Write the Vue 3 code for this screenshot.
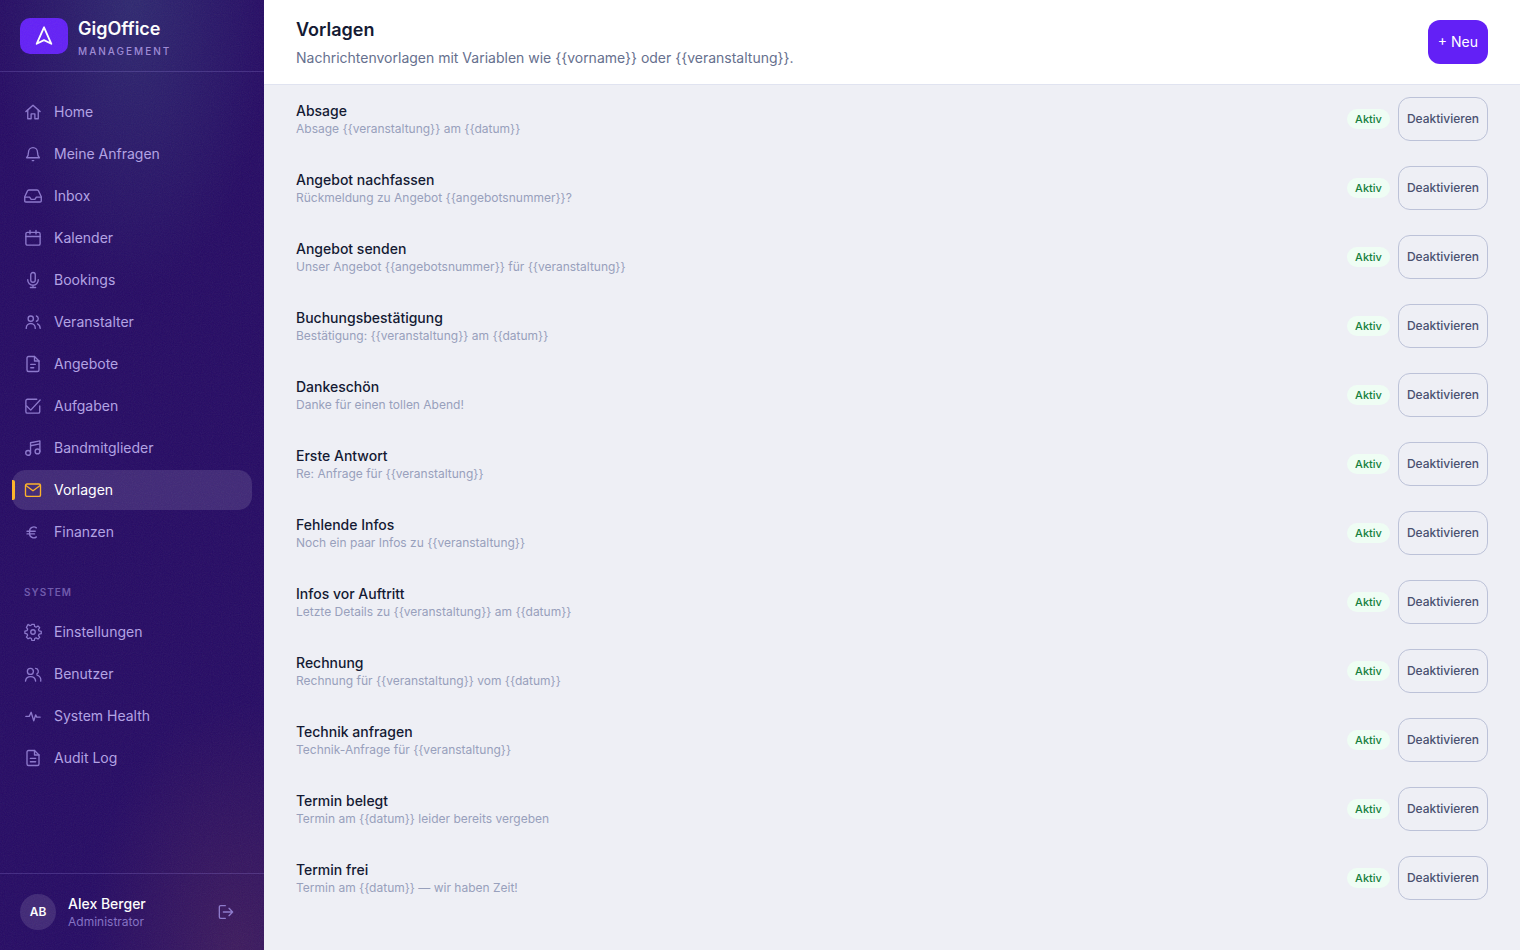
<script setup>
import { ref } from 'vue'

const icons = {
    home: '<path d="M2.500 11.500 12 3l9.500 8.500"/><path d="M5 9.500V21h4.500v-6.500h5V21H19V9.500"/>',
    bell: '<path d="M6 9.500a6 6 0 0 1 12 0c0 5 2.500 7.500 2.500 7.500h-17S6 14.500 6 9.500Z"/><path d="M11 20.800h2"/>',
    inbox: '<path d="M1 13 4.500 5.500Q5 4 6.500 4h11q1.500 0 2 1.500L23 13v5.500q0 1.500-1.500 1.500h-19Q1 20 1 18.500Z"/><path d="M1 13.500h6.500l2 3h5l2-3H23"/>',
    calendar: '<rect x="2.500" y="4.500" width="19" height="17" rx="2"/><path d="M2.500 10h19M8 2v4.500M16 2v4.500"/>',
    mic: '<rect x="9" y="2" width="6" height="13" rx="3"/><path d="M5 11.500v.5a7 7 0 0 0 14 0v-.5M12 19v3M8.500 22h7"/>',
    people: '<circle cx="9" cy="7.500" r="3.500"/><path d="M3 20.500v-.5a6 6 0 0 1 12 0v.5M16.500 4a3.700 3.700 0 0 1 0 7M18 14.500a6.500 6.500 0 0 1 3.500 6"/>',
    file: '<path d="M14 2H6a2 2 0 0 0-2 2v16a2 2 0 0 0 2 2h12a2 2 0 0 0 2-2V8Z"/><path d="M14 2v6h6M9 12.500h6M9 17h4"/>',
    check: '<path d="M17 3H4.500a2 2 0 0 0-2 2v14.500a2 2 0 0 0 2 2H19a2 2 0 0 0 2-2V12"/><path d="m3.500 12 5.500 5.500L21.500 4"/>',
    music: '<circle cx="5.500" cy="18.500" r="3.200"/><circle cx="18" cy="16.500" r="3.200"/><path d="M8.700 18.500V5l12.500-2.500v14M8.700 9l12.500-2.500"/>',
    mail: '<rect x="2" y="4" width="20" height="16.500" rx="2"/><path d="m2.500 6 9.500 7 9.500-7"/>',
    euro: '<path d="M16.500 6.500A5.500 5.500 0 0 0 7.500 11v3a5.500 5.500 0 0 0 9 4.500M4 11h11M4 14.500h10"/>',
    gear: '<circle cx="12" cy="12" r="3"/><path d="M10.300 1.800h3.400l.6 3 2.100.9 2.600-1.700 2.400 2.400-1.700 2.600.9 2 3 .7v3.200l-3 .6-.9 2.100 1.700 2.600-2.400 2.400-2.600-1.700-2.100.9-.6 3h-3.400l-.6-3-2.100-.9L5 22.200l-2.400-2.400 1.700-2.600-.9-2.100-3-.6v-3.200l3-.7.9-2-1.700-2.600L5 1.800l2.600 1.700 2.100-.9Z" transform="translate(.8 .2) scale(.94)"/>',
    users: '<circle cx="8.500" cy="8.500" r="4"/><path d="M2 21.500a6.800 6.800 0 0 1 13.500 0M15.500 4.500a4 4 0 0 1 1.500 7.500M17.500 13.500a7 7 0 0 1 4.800 8"/>',
    pulse: '<path d="M2.500 12.500H7l2.500-5.500 3.500 11.500 2.500-8 1.500 3h4.500"/>',
    log: '<path d="M14 2H6a2 2 0 0 0-2 2v16a2 2 0 0 0 2 2h12a2 2 0 0 0 2-2V8Z"/><path d="M14 2v6h6M8.500 12.500h7M8.500 17h7"/>',
}

const mainNav = [
    { label: 'Home', icon: 'home' },
    { label: 'Meine Anfragen', icon: 'bell' },
    { label: 'Inbox', icon: 'inbox' },
    { label: 'Kalender', icon: 'calendar' },
    { label: 'Bookings', icon: 'mic' },
    { label: 'Veranstalter', icon: 'people' },
    { label: 'Angebote', icon: 'file' },
    { label: 'Aufgaben', icon: 'check' },
    { label: 'Bandmitglieder', icon: 'music' },
    { label: 'Vorlagen', icon: 'mail' },
    { label: 'Finanzen', icon: 'euro' },
]

const systemNav = [
    { label: 'Einstellungen', icon: 'gear' },
    { label: 'Benutzer', icon: 'users' },
    { label: 'System Health', icon: 'pulse' },
    { label: 'Audit Log', icon: 'log' },
]

const current = ref('Vorlagen')

const intro = 'Nachrichtenvorlagen mit Variablen wie {{vorname}} oder {{veranstaltung}}.'

const templates = ref([
    { name: 'Absage', subject: 'Absage {{veranstaltung}} am {{datum}}', active: true },
    { name: 'Angebot nachfassen', subject: 'Rückmeldung zu Angebot {{angebotsnummer}}?', active: true },
    { name: 'Angebot senden', subject: 'Unser Angebot {{angebotsnummer}} für {{veranstaltung}}', active: true },
    { name: 'Buchungsbestätigung', subject: 'Bestätigung: {{veranstaltung}} am {{datum}}', active: true },
    { name: 'Dankeschön', subject: 'Danke für einen tollen Abend!', active: true },
    { name: 'Erste Antwort', subject: 'Re: Anfrage für {{veranstaltung}}', active: true },
    { name: 'Fehlende Infos', subject: 'Noch ein paar Infos zu {{veranstaltung}}', active: true },
    { name: 'Infos vor Auftritt', subject: 'Letzte Details zu {{veranstaltung}} am {{datum}}', active: true },
    { name: 'Rechnung', subject: 'Rechnung für {{veranstaltung}} vom {{datum}}', active: true },
    { name: 'Technik anfragen', subject: 'Technik-Anfrage für {{veranstaltung}}', active: true },
    { name: 'Termin belegt', subject: 'Termin am {{datum}} leider bereits vergeben', active: true },
    { name: 'Termin frei', subject: 'Termin am {{datum}} — wir haben Zeit!', active: true },
])
</script>

<template>
    <div class="app">
        <aside class="sidebar">
            <svg class="grain" aria-hidden="true">
                <filter id="grain">
                    <feTurbulence type="fractalNoise" baseFrequency="0.9" numOctaves="4" stitchTiles="stitch" />
                </filter>
                <rect width="100%" height="100%" filter="url(#grain)" />
            </svg>

            <div class="brand">
                <span class="logo">
                    <svg viewBox="0 0 24 24" aria-hidden="true"><path d="M12 2.500 4 20.500 12 16.500l8 4Z" /></svg>
                </span>
                <div class="brand-text">
                    <div class="brand-name">GigOffice</div>
                    <div class="brand-sub">MANAGEMENT</div>
                </div>
            </div>

            <nav class="nav">
                <a
                    v-for="item in mainNav"
                    :key="item.label"
                    href="#"
                    class="nav-item"
                    :class="{ active: item.label === current }"
                    @click.prevent="current = item.label"
                >
                    <svg class="icon" viewBox="0 0 24 24" aria-hidden="true" v-html="icons[item.icon]"></svg>
                    <span>{{ item.label }}</span>
                </a>
                <div class="nav-label">SYSTEM</div>
                <a
                    v-for="item in systemNav"
                    :key="item.label"
                    href="#"
                    class="nav-item"
                    :class="{ active: item.label === current }"
                    @click.prevent="current = item.label"
                >
                    <svg class="icon" viewBox="0 0 24 24" aria-hidden="true" v-html="icons[item.icon]"></svg>
                    <span>{{ item.label }}</span>
                </a>
            </nav>

            <div class="account">
                <span class="avatar">AB</span>
                <div class="account-text">
                    <div class="account-name">Alex Berger</div>
                    <div class="account-role">Administrator</div>
                </div>
                <button type="button" class="logout" aria-label="Abmelden">
                    <svg viewBox="0 0 24 24" aria-hidden="true">
                        <path d="M11 2.500H4a2 2 0 0 0-2 2v15a2 2 0 0 0 2 2h7M8 12h14M16.500 6.500 22 12l-5.500 5.500" />
                    </svg>
                </button>
            </div>
        </aside>

        <main class="content">
            <header class="page-head">
                <div>
                    <h1>Vorlagen</h1>
                    <p>{{ intro }}</p>
                </div>
                <button type="button" class="btn-primary">+ Neu</button>
            </header>

            <ul class="list">
                <li v-for="t in templates" :key="t.name" class="row">
                    <div class="row-text">
                        <div class="row-name">{{ t.name }}</div>
                        <div class="row-subject">{{ t.subject }}</div>
                    </div>
                    <span class="badge" :class="{ off: !t.active }">{{ t.active ? 'Aktiv' : 'Inaktiv' }}</span>
                    <button type="button" class="btn-outline" @click="t.active = !t.active">
                        {{ t.active ? 'Deaktivieren' : 'Aktivieren' }}
                    </button>
                </li>
            </ul>
        </main>
    </div>
</template>

<style>
body {
    margin: 0;
    background: #eeeff5;
}
</style>

<style scoped>
.app {
    display: flex;
    min-height: 100vh;
    font-family: Inter, "Liberation Sans", sans-serif;
    font-size: 14px;
    color: #141a33;
}

.app * {
    box-sizing: border-box;
}

button {
    font-family: inherit;
    cursor: pointer;
}

.sidebar {
    position: sticky;
    top: 0;
    display: flex;
    flex-direction: column;
    flex-shrink: 0;
    width: 264px;
    height: 100vh;
    background:
        radial-gradient(ellipse 140px 290px at 50% 0, rgba(60, 84, 130, 0.4), transparent),
        radial-gradient(ellipse 150px 250px at 90% 100%, rgba(110, 60, 80, 0.32), transparent),
        #260b64;
}

.grain {
    position: absolute;
    inset: 0;
    width: 100%;
    height: 100%;
    opacity: 0.08;
    pointer-events: none;
}

.brand {
    display: flex;
    align-items: center;
    gap: 10px;
    height: 72px;
    padding: 0 20px;
    border-bottom: 1px solid rgba(160, 140, 230, 0.24);
}

.logo {
    display: flex;
    align-items: center;
    justify-content: center;
    width: 48px;
    height: 36px;
    border-radius: 10px;
    background: #6320f6;

    svg {
        width: 22px;
        height: 22px;
        fill: none;
        stroke: #fff;
        stroke-width: 2;
        stroke-linejoin: round;
    }
}

.brand-text {
    padding-top: 4px;
}

.brand-name {
    font-size: 18px;
    line-height: 26px;
    font-weight: 600;
    color: #fff;
}

.brand-sub {
    font-size: 10px;
    line-height: 18px;
    font-weight: 500;
    letter-spacing: 2px;
    color: #9e8ad6;
}

.nav {
    display: flex;
    flex-direction: column;
    flex: 1;
    gap: 2px;
    padding: 20px 12px;
}

.nav-item {
    position: relative;
    display: flex;
    align-items: center;
    gap: 12px;
    height: 40px;
    padding: 0 12px;
    border-radius: 14px;
    line-height: 18px;
    color: #b3a3e3;
    text-decoration: none;

    &.active {
        background: rgba(255, 255, 255, 0.12);
        color: #fff;

        .icon {
            stroke: #fcb32c;
        }

        &::before {
            content: "";
            position: absolute;
            left: 0;
            top: 10px;
            width: 3px;
            height: 20px;
            border-radius: 0 2px 2px 0;
            background: #fcb32c;
        }
    }
}

.icon {
    width: 18px;
    height: 18px;
    fill: none;
    stroke: #8d79cc;
    stroke-width: 1.8;
    stroke-linecap: round;
    stroke-linejoin: round;
}

.nav-label {
    padding: 30px 12px 10px;
    font-size: 10px;
    line-height: 16px;
    font-weight: 600;
    letter-spacing: 1px;
    color: #6d57ab;
}

.account {
    display: flex;
    align-items: center;
    gap: 12px;
    height: 77px;
    padding: 0 20px;
    border-top: 1px solid rgba(160, 140, 230, 0.24);
}

.avatar {
    display: flex;
    align-items: center;
    justify-content: center;
    width: 36px;
    height: 36px;
    border-radius: 50%;
    background: rgba(255, 255, 255, 0.12);
    font-size: 12px;
    line-height: 16px;
    font-weight: 600;
    color: #fff;
}

.account-text {
    flex: 1;
    padding-top: 2px;
}

.account-name {
    line-height: 18px;
    font-weight: 500;
    color: #fff;
}

.account-role {
    font-size: 12px;
    line-height: 18px;
    color: #8370c4;
}

.logout {
    display: flex;
    align-items: center;
    justify-content: center;
    width: 36px;
    height: 36px;
    padding: 0;
    border: 0;
    background: none;

    svg {
        width: 16px;
        height: 16px;
        fill: none;
        stroke: #8d79cc;
        stroke-width: 2;
        stroke-linecap: round;
        stroke-linejoin: round;
    }
}

.content {
    flex: 1;
    min-width: 0;
}

.page-head {
    display: flex;
    align-items: center;
    justify-content: space-between;
    padding: 16px 32px;
    border-bottom: 1px solid #e0e3f0;
    background: #fff;

    h1 {
        margin: 0;
        font-size: 18px;
        line-height: 28px;
        font-weight: 600;
    }

    p {
        margin: 4px 0 0;
        line-height: 20px;
        color: #66708e;
    }
}

.btn-primary {
    height: 44px;
    padding: 0 10px;
    border: 0;
    border-radius: 12px;
    background: #6320f6;
    font-size: 14px;
    line-height: 18px;
    color: #fff;
}

.list {
    margin: 0;
    padding: 0 32px;
    list-style: none;
}

.row {
    display: flex;
    align-items: center;
    gap: 8px;
    padding: 12px 0;
    border-bottom: 1px solid transparent;
}

.row-text {
    flex: 1;
    min-width: 0;
    padding-top: 2px;
}

.row-name {
    line-height: 18px;
    font-weight: 500;
}

.row-subject {
    font-size: 12px;
    line-height: 18px;
    color: #98a0bc;
}

.badge {
    padding: 0 8px;
    border-radius: 10px;
    background: #effdf4;
    font-size: 11px;
    line-height: 20px;
    font-weight: 500;
    color: #15803d;

    &.off {
        background: #e2e4ee;
        color: #66708e;
    }
}

.btn-outline {
    height: 44px;
    padding: 0 8px;
    border: 1px solid #bcc2d8;
    border-radius: 12px;
    background: none;
    font-size: 12px;
    line-height: 16px;
    font-weight: 500;
    color: #4a5170;
}
</style>
